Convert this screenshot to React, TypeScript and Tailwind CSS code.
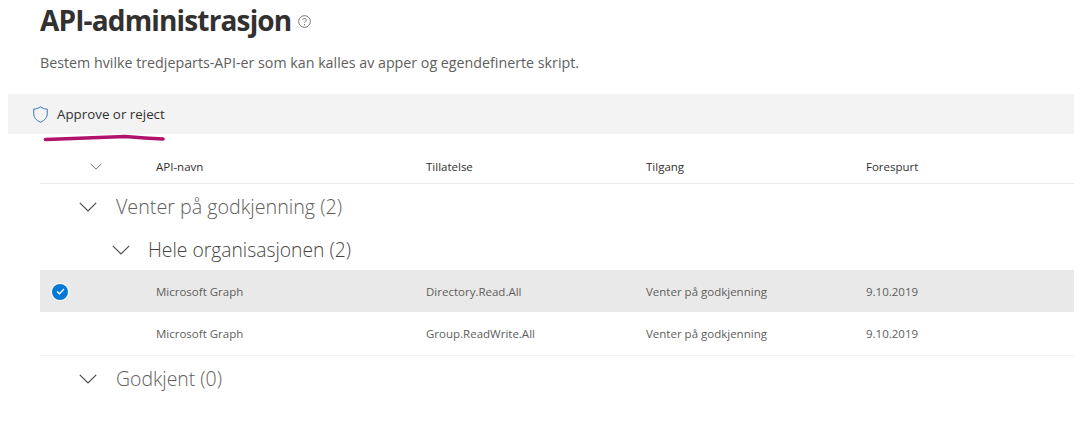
import React from "react";

const rows = [
  { api: "Microsoft Graph", permission: "Directory.Read.All", access: "Venter på godkjenning", date: "9.10.2019", selected: true },
  { api: "Microsoft Graph", permission: "Group.ReadWrite.All", access: "Venter på godkjenning", date: "9.10.2019", selected: false },
];

function Chevron({ className }: { className: string }) {
  return (
    <svg viewBox="0 0 18 10" fill="none" stroke="#4d4d4d" strokeWidth="1.2" className={className}>
      <path d="M0.8 0.8 L9 9 L17.2 0.8" />
    </svg>
  );
}

export default function App() {
  return (
    <div className="relative w-[1082px] h-[428px] overflow-hidden bg-white font-['Open_Sans',sans-serif]">
      {/* Title */}
      <div className="pl-10 h-[94px]">
        <div className="flex items-center h-[42px]">
          <h1 className="text-[28px] leading-[40px] font-bold text-[#323130] tracking-[-0.85px] mb-[2px]">API-administrasjon</h1>
          <svg viewBox="0 0 14 14" fill="none" className="w-[13px] h-[13px] ml-[7px]">
            <circle cx="7" cy="7" r="6.3" stroke="#605e5c" strokeWidth="0.9" />
            <path d="M5 5.4 C5 3.2 9 3.2 9 5.4 C9 6.8 7 6.8 7 8.4" stroke="#605e5c" strokeWidth="0.9" />
            <circle cx="7" cy="10.4" r="0.6" fill="#605e5c" />
          </svg>
        </div>
        <p className="mt-[11px] text-[14.25px] leading-5 text-[#605e5c]">Bestem hvilke tredjeparts-API-er som kan kalles av apper og egendefinerte skript.</p>
      </div>

      {/* Command bar */}
      <div className="ml-2 mr-2 h-10 bg-[#f3f3f3] flex items-center pl-[25px]">
        <svg viewBox="0 0 16 18" fill="none" className="w-[15px] h-[17px]">
          <path d="M8 0.8 C10 2.4 12.6 3.2 15.2 3.2 V8 C15.2 12.4 12.4 15.4 8 17.2 C3.6 15.4 0.8 12.4 0.8 8 V3.2 C3.4 3.2 6 2.4 8 0.8 Z" stroke="#2b6cb8" strokeWidth="1" />
        </svg>
        <span className="ml-[9px] mt-px text-[13.35px] text-[#323130]">Approve or reject</span>
      </div>

      {/* Table */}
      <div className="ml-10 mr-2 mt-4 text-[11.5px]">
        <div className="flex items-center h-[34px] border-b-[1.5px] border-[#edebe9] text-[#323130]">
          <div className="w-[116px] pl-[50px]">
            <Chevron className="w-[12px] h-[7px]" />
          </div>
          <div className="w-[270px]">API-navn</div>
          <div className="w-[220px]">Tillatelse</div>
          <div className="w-[220px]">Tilgang</div>
          <div>Forespurt</div>
        </div>

        <div className="flex items-center h-[45px] pl-[39px] text-[#605e5c]">
          <Chevron className="w-[18px] h-[10px]" />
          <span className="ml-[19px] text-[19.7px] font-light">Venter på godkjenning (2)</span>
        </div>
        <div className="flex items-center h-[41px] pl-[72px] text-[#484644]">
          <Chevron className="w-[18px] h-[10px]" />
          <span className="ml-[18px] mt-[2px] text-[19.3px] font-light">Hele organisasjonen (2)</span>
        </div>

        {rows.map((row) => (
          <div
            key={row.permission}
            className={`flex items-center text-[#605e5c] ${row.selected ? "h-[42px] pt-px bg-[#e9e9e9]" : "h-[44px] border-b border-[#f3f2f1]"}`}
          >
            <div className="w-[116px] pl-[12px]">
              {row.selected && (
                <div className="w-[16px] h-[16px] rounded-full bg-[#0078d4] ring-1 ring-white flex items-center justify-center">
                  <svg viewBox="0 0 10 8" fill="none" stroke="white" strokeWidth="1.6" className="w-[9px] h-[7px]">
                    <path d="M1 4 L3.8 6.6 L9 1.2" />
                  </svg>
                </div>
              )}
            </div>
            <div className="w-[270px]">{row.api}</div>
            <div className="w-[220px]">{row.permission}</div>
            <div className="w-[220px]">{row.access}</div>
            <div>{row.date}</div>
          </div>
        ))}

        <div className="flex items-center h-[46px] pl-[39px] text-[#605e5c]">
          <Chevron className="w-[18px] h-[10px]" />
          <span className="ml-[19px] text-[19.4px] font-light">Godkjent (0)</span>
        </div>
      </div>

      {/* Hand-drawn underline on top of the screenshot */}
      <svg viewBox="0 0 125 10" fill="none" className="absolute left-[42px] top-[132px] w-[125px] h-[10px]">
        <path d="M3.5 7.5 C30 6.5 60 5.5 83 4.5 C95 5.5 110 6.5 121 7" stroke="#b0136b" strokeWidth="3.6" strokeLinecap="round" />
      </svg>
    </div>
  );
}
